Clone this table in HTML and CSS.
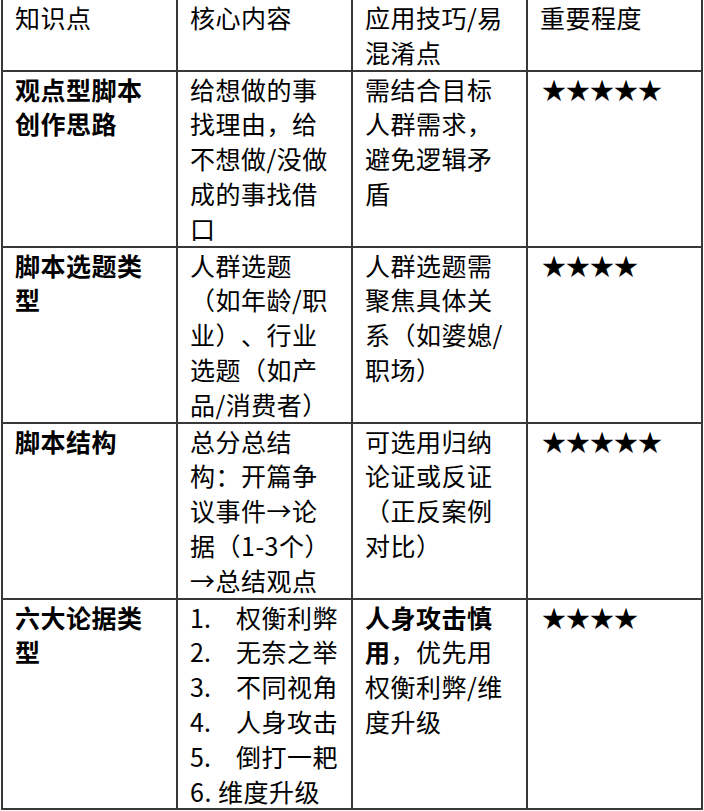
FILE: index.html
```html
<!DOCTYPE html>
<html lang="zh-CN">
<head>
<meta charset="utf-8">
<title>知识点表</title>
<link rel="stylesheet" href="styles.css">
</head>
<body>
<table class="kt">
  <colgroup>
    <col class="c"><col class="c"><col class="c"><col class="c">
  </colgroup>
  <tr class="head">
    <td>知识点</td>
    <td>核心内容</td>
    <td>应用技巧/易混淆点</td>
    <td>重要程度</td>
  </tr>
  <tr>
    <td class="key">观点型脚本创作思路</td>
    <td>给想做的事找理由，给不想做/没做成的事找借口</td>
    <td>需结合目标人群需求，避免逻辑矛盾</td>
    <td class="stars">★★★★★</td>
  </tr>
  <tr>
    <td class="key">脚本选题类型</td>
    <td>人群选题（如年龄/职业）、行业选题（如产品/消费者）</td>
    <td>人群选题需聚焦具体关系（如婆媳/职场）</td>
    <td class="stars">★★★★</td>
  </tr>
  <tr>
    <td class="key">脚本结构</td>
    <td>总分总结构：开篇争议事件→论据（1-3个）→总结观点</td>
    <td>可选用归纳论证或反证（正反案例对比）</td>
    <td class="stars">★★★★★</td>
  </tr>
  <tr>
    <td class="key">六大论据类型</td>
    <td>
      <div class="li"><span class="num">1.</span>权衡利弊</div>
      <div class="li"><span class="num">2.</span>无奈之举</div>
      <div class="li"><span class="num">3.</span>不同视角</div>
      <div class="li"><span class="num">4.</span>人身攻击</div>
      <div class="li"><span class="num">5.</span>倒打一耙</div>
      <div class="li">6. 维度升级</div>
    </td>
    <td><b>人身攻击慎用</b>，优先用权衡利弊/维度升级</td>
    <td class="stars">★★★★</td>
  </tr>
</table>
</body>
</html>
```

FILE: styles.css
```css
html, body {
  margin: 0;
  padding: 0;
  background: #ffffff;
}

body {
  font-family: "Noto Sans CJK SC", "Noto Sans", sans-serif;
  font-size: 25px;
  line-height: 34.8px;
  color: #000000;
  text-spacing-trim: space-all;
}

.kt {
  border-collapse: collapse;
  table-layout: fixed;
  width: 702px;
  margin: -1px 0 0 1px;
}

.kt .c {
  width: 175px;
}

.kt td {
  border: 2px solid #383838;
  border-top: 0;
  padding: 1px 16px 0 12px;
  vertical-align: top;
  letter-spacing: 0.5px;
}

.kt tr + tr td {
  border-top: 2px solid #383838;
  padding-top: 0;
}

.key {
  font-weight: bold;
}

.kt td.stars {
  font-size: 24px;
  letter-spacing: 0;
  padding-left: 14px;
}

.li {
  white-space: nowrap;
}

.num {
  display: inline-block;
  width: 46px;
  letter-spacing: 0;
}
```
